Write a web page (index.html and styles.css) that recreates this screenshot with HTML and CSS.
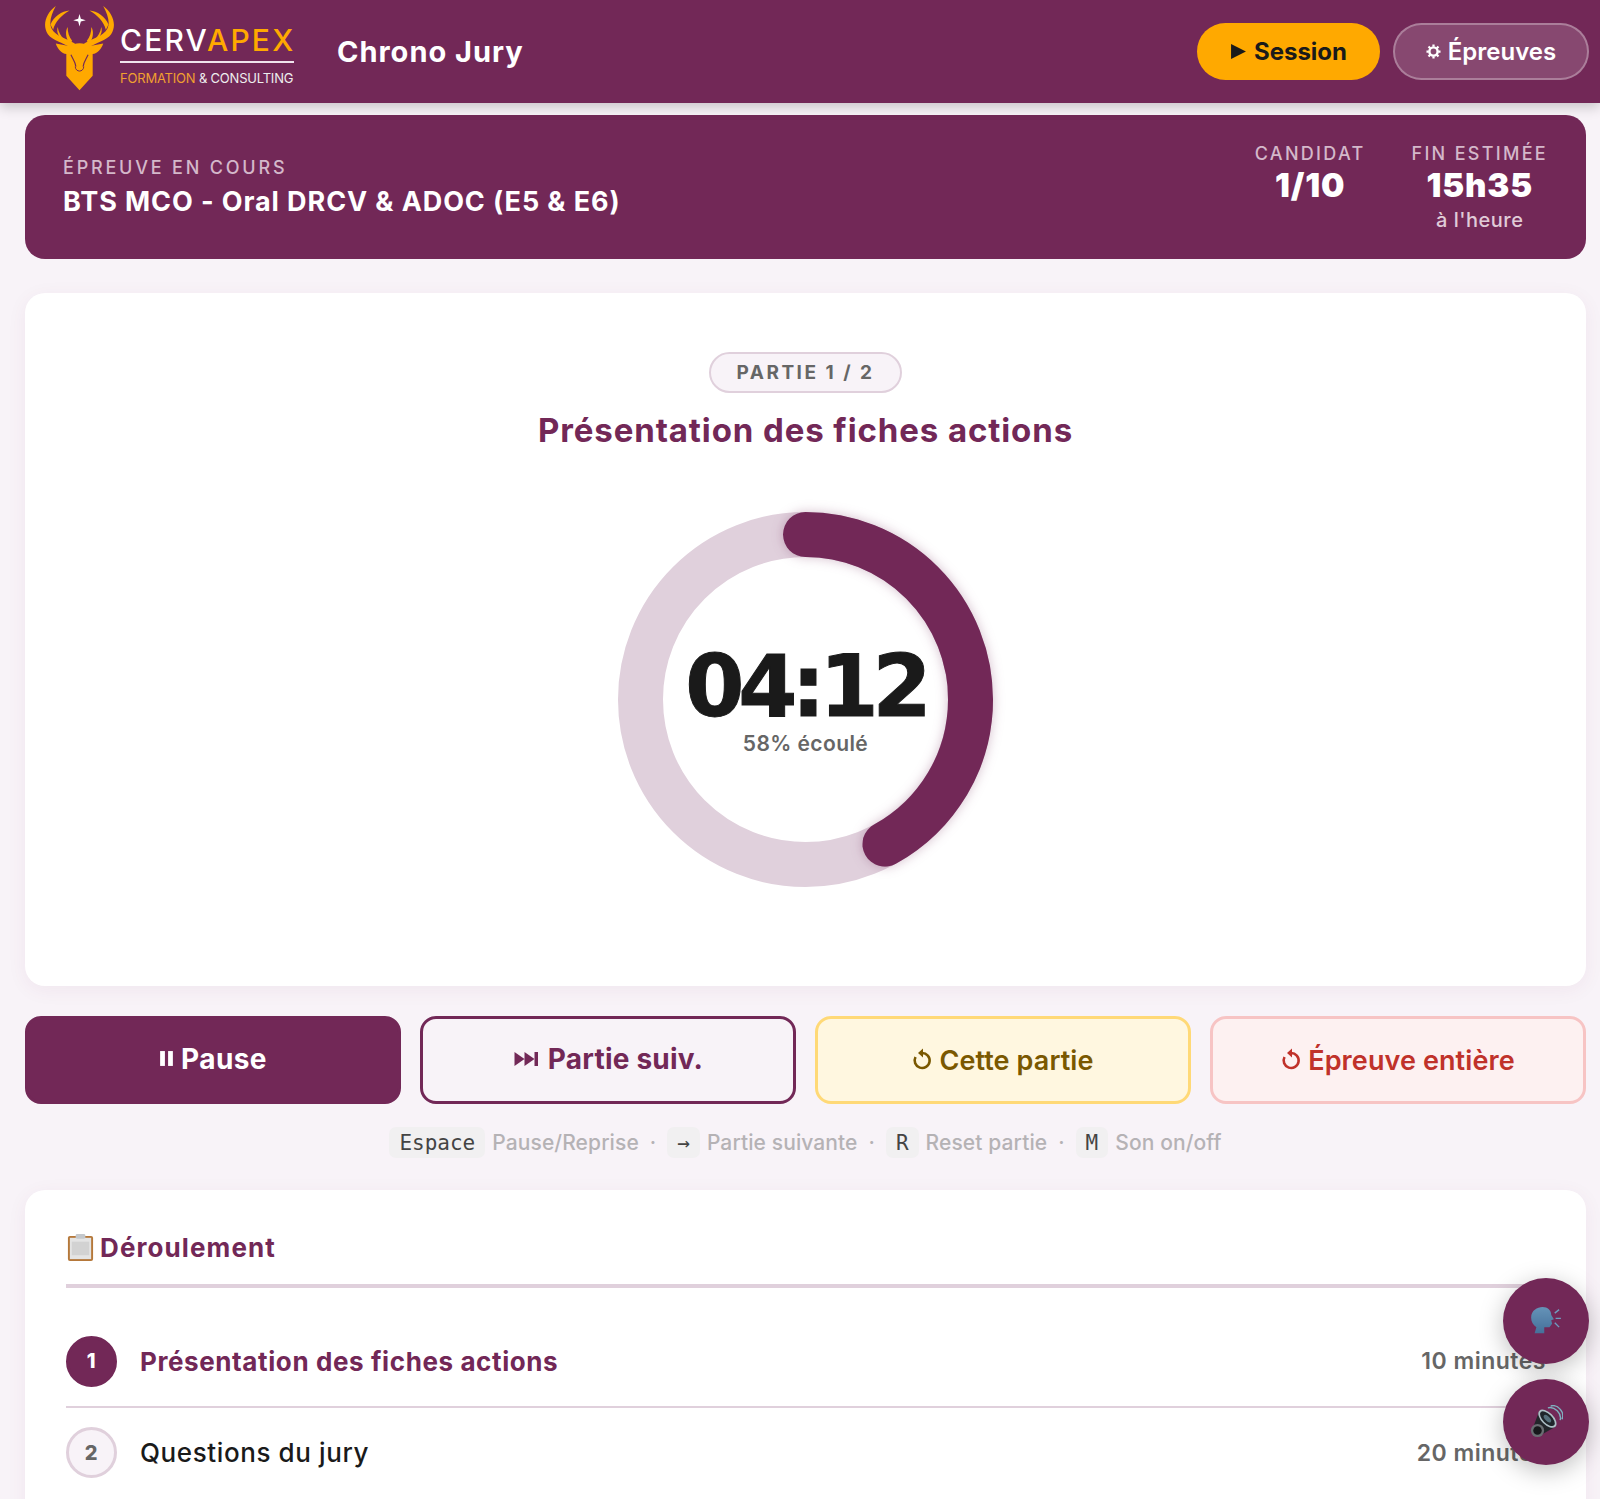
FILE: index.html
```html
<!DOCTYPE html>
<html lang="fr">
<head>
    <meta charset="UTF-8">
    <meta name="viewport" content="width=device-width, initial-scale=1.0">
    <title>Chrono Jury</title>
    <link rel="stylesheet" href="styles.css">
</head>
<body>
    <header class="topbar">
        <div class="brand">
            <div class="logo">
                <svg class="logo-deer" viewBox="40 8 220 264" aria-hidden="true">
                    <g fill="#ffa900">
                        <path d="M78 14 C48 36 36 72 54 100 C68 120 100 124 128 144 L136 128 C110 112 78 106 66 84 C56 66 64 40 78 14 Z"/>
                        <path d="M120 28 C96 30 72 46 62 70 L70 86 C76 62 96 42 120 28 Z"/>
                        <path d="M114 78 C106 92 108 112 120 128 L128 120 C118 108 114 94 114 78 Z"/>
                        <path d="M84 78 C80 90 84 104 96 116 L104 116 C94 106 86 94 84 78 Z"/>
                    </g>
                    <g fill="#ffa900" transform="matrix(-1 0 0 1 300 0)">
                        <path d="M78 14 C48 36 36 72 54 100 C68 120 100 124 128 144 L136 128 C110 112 78 106 66 84 C56 66 64 40 78 14 Z"/>
                        <path d="M120 28 C96 30 72 46 62 70 L70 86 C76 62 96 42 120 28 Z"/>
                        <path d="M114 78 C106 92 108 112 120 128 L128 120 C118 108 114 94 114 78 Z"/>
                        <path d="M84 78 C80 90 84 104 96 116 L104 116 C94 106 86 94 84 78 Z"/>
                    </g>
                    <path fill="#ffa900" d="M78 128 L122 136 C132 124 168 124 178 136 L222 128 C216 146 204 158 190 160 L190 226 L150 270 L110 226 L110 160 C96 158 84 146 78 128 Z"/>
                    <path fill="none" stroke="#722857" stroke-width="3.5" d="M124 162 C130 176 138 184 139 198 M176 162 C170 176 162 184 161 198"/>
                    <path fill="none" stroke="#722857" stroke-width="3" d="M137 198 C138 216 162 216 163 198"/>
                    <path fill="#fff" d="M150 38 L154 53 L169 57 L154 61 L150 76 L146 61 L131 57 L146 53 Z"/>
                </svg>
                <div class="logo-text">
                    <div class="logo-name">CERV<span>APEX</span></div>
                    <div class="logo-rule"></div>
                    <div class="logo-sub"><span>FORMATION</span> &amp; CONSULTING</div>
                </div>
            </div>
            <div class="app-title">Chrono Jury</div>
        </div>
        <nav class="top-actions">
            <button class="pill pill-session">
                <svg class="ico-play" viewBox="0 0 16 16"><path d="M1 1 L15 8 L1 15 Z"/></svg>
                Session
            </button>
            <button class="pill pill-ghost">
                <svg class="ico-gear" viewBox="0 0 16 16">
                    <circle cx="8" cy="8" r="4.4" fill="none" stroke="#fff" stroke-width="2.6"/>
                    <path stroke="#fff" stroke-width="2.4" d="M8 0.5V3M8 13V15.5M0.5 8H3M13 8H15.5M2.7 2.7L4.5 4.5M11.5 11.5L13.3 13.3M13.3 2.7L11.5 4.5M4.5 11.5L2.7 13.3"/>
                </svg>
                Épreuves
            </button>
        </nav>
    </header>

    <main class="page">
        <section class="banner">
            <div>
                <div class="banner-label">ÉPREUVE EN COURS</div>
                <div class="banner-title">BTS MCO - Oral DRCV &amp; ADOC (E5 &amp; E6)</div>
            </div>
            <div class="banner-stats">
                <div class="stat">
                    <div class="stat-label">CANDIDAT</div>
                    <div class="stat-value">1/10</div>
                </div>
                <div class="stat">
                    <div class="stat-label">FIN ESTIMÉE</div>
                    <div class="stat-value">15h35</div>
                    <div class="stat-note">à l'heure</div>
                </div>
            </div>
        </section>

        <section class="card timer-card">
            <div class="part-badge">PARTIE 1 / 2</div>
            <h2 class="part-title">Présentation des fiches actions</h2>
            <div class="ring">
                <svg class="ring-svg" viewBox="0 0 375 375">
                    <circle class="ring-track" cx="187.5" cy="187.5" r="165"/>
                    <circle class="ring-progress" cx="187.5" cy="187.5" r="165" pathLength="100" stroke-dasharray="42 100" transform="rotate(-90 187.5 187.5)"/>
                </svg>
                <div class="ring-center">
                    <div class="time">04:12</div>
                    <div class="elapsed">58% écoulé</div>
                </div>
            </div>
        </section>

        <section class="controls">
            <button class="ctl ctl-pause">
                <svg class="ico-pause" viewBox="0 0 14 16"><rect x="1" y="1" width="4.5" height="14"/><rect x="8.5" y="1" width="4.5" height="14"/></svg>
                Pause
            </button>
            <button class="ctl ctl-next">
                <svg class="ico-next" viewBox="0 0 26 16"><path d="M1 1 L11 8 L1 15 Z M11 1 L21 8 L11 15 Z"/><rect x="21" y="1" width="3.5" height="14"/></svg>
                Partie suiv.
            </button>
            <button class="ctl ctl-part">
                <svg class="ico-reset" viewBox="0 0 20 24"><path d="M10 5 A7.5 7.5 0 1 1 3.5 9" fill="none" stroke="currentColor" stroke-width="2.6"/><path d="M11 0.5 L6 5 L11 9.5 Z" fill="currentColor"/></svg>
                Cette partie
            </button>
            <button class="ctl ctl-all">
                <svg class="ico-reset" viewBox="0 0 20 24"><path d="M10 5 A7.5 7.5 0 1 1 3.5 9" fill="none" stroke="currentColor" stroke-width="2.6"/><path d="M11 0.5 L6 5 L11 9.5 Z" fill="currentColor"/></svg>
                Épreuve entière
            </button>
        </section>

        <p class="shortcuts">
            <kbd>Espace</kbd><span>Pause/Reprise</span><i>·</i>
            <kbd>→</kbd><span>Partie suivante</span><i>·</i>
            <kbd>R</kbd><span>Reset partie</span><i>·</i>
            <kbd>M</kbd><span>Son on/off</span>
        </p>

        <section class="card steps-card">
            <h3 class="steps-title">
                <svg class="ico-clip" viewBox="0 0 30 30">
                    <rect x="2" y="3" width="26" height="26" rx="2" fill="#b5783a"/>
                    <rect x="4" y="5" width="22" height="22" fill="#e4e4e4"/>
                    <rect x="6" y="9" width="18" height="14" fill="#d2d2d2"/>
                    <rect x="10" y="1" width="10" height="5" rx="1.5" fill="#c4c8cc"/>
                </svg>
                Déroulement
            </h3>
            <div class="step step-active">
                <div class="step-num">1</div>
                <div class="step-name">Présentation des fiches actions</div>
                <div class="step-time">10 minutes</div>
            </div>
            <div class="step">
                <div class="step-num">2</div>
                <div class="step-name">Questions du jury</div>
                <div class="step-time">20 minutes</div>
            </div>
        </section>
    </main>

    <div class="fabs">
        <button class="fab">
            <svg viewBox="0 0 36 32" width="32" height="28">
                <defs>
                    <linearGradient id="headBlue" x1="0" y1="0" x2="0" y2="1">
                        <stop offset="0" stop-color="#6593b8"/>
                        <stop offset="1" stop-color="#45709a"/>
                    </linearGradient>
                </defs>
                <path fill="url(#headBlue)" d="M1 12 C1 4 8 0 14 0 C20 0 24 4 24 9 L27 14 L24 15 L25 19 L22 23 L16 23 L16 30 L5 30 L7 23 C3 20 1 17 1 12 Z"/>
                <path fill="none" stroke="#6f9cc0" stroke-width="1.6" d="M28 7 L33 3 M29 13 H35 M28 18 L33 23"/>
            </svg>
        </button>
        <button class="fab">
            <svg viewBox="0 0 36 36" width="34" height="34">
                <path fill="none" stroke="#7fb0bf" stroke-width="1.5" d="M20 3 C27 1 35 9 33 16 M23 1 C31 -1 38 8 35 15"/>
                <path fill="#23262b" d="M11 6 L28 23 L14 31 L5 22 Z"/>
                <ellipse cx="19.5" cy="14.5" rx="12" ry="6.5" transform="rotate(45 19.5 14.5)" fill="#aebfc6"/>
                <ellipse cx="19.5" cy="14.5" rx="10" ry="4.8" transform="rotate(45 19.5 14.5)" fill="#1f262b"/>
                <ellipse cx="19.5" cy="14.5" rx="5" ry="2.4" transform="rotate(45 19.5 14.5)" fill="#56707c"/>
                <circle cx="9" cy="27" r="7" fill="#6a6d72"/>
                <circle cx="9" cy="27" r="4.5" fill="#17181b"/>
            </svg>
        </button>
    </div>
</body>
</html>
```

FILE: styles.css
```css
:root {
    --plum: #722857;
    --plum-light: #e0d0dc;
    --orange: #ffa900;
    --bg: #f8f3f8;
    --ink: #1a1a1a;
    --grey: #666666;
}
* {
    box-sizing: border-box;
}
html, body {
    margin: 0;
    height: 100%;
    overflow: hidden;
}
body {
    font-family: Inter, "Open Sans", sans-serif;
    background: var(--bg);
    color: var(--ink);
}
button {
    font-family: inherit;
    cursor: pointer;
}

/* top bar */
.topbar {
    display: flex;
    justify-content: space-between;
    align-items: center;
    height: 103px;
    padding: 0 11px 0 43px;
    background: var(--plum);
    box-shadow: 0 4px 12px rgba(0, 0, 0, 0.2);
    position: relative;
}
.brand {
    display: flex;
    align-items: center;
    gap: 43px;
}
.logo {
    display: flex;
    align-items: flex-end;
    gap: 4px;
    margin-bottom: 8px;
}
.logo-deer {
    width: 73px;
    height: 87px;
}
.logo-text {
    width: 174px;
    margin-bottom: 5px;
}
.logo-name {
    color: #fff;
    font-size: 30px;
    font-weight: 500;
    letter-spacing: 2.2px;
    line-height: 30px;
}
.logo-name span {
    color: var(--orange);
}
.logo-rule {
    height: 2px;
    background: #f0e4ec;
    margin: 6px 0 8px;
}
.logo-sub {
    color: #eee;
    font-size: 13px;
    line-height: 15px;
    letter-spacing: -0.2px;
    white-space: nowrap;
}
.logo-sub span {
    color: #f0a030;
}
.app-title {
    color: #fff;
    font-size: 29px;
    font-weight: 700;
    letter-spacing: 1px;
}
.top-actions {
    display: flex;
    align-items: center;
    gap: 13px;
}
.pill {
    display: flex;
    align-items: center;
    justify-content: center;
    gap: 7px;
    height: 57px;
    border-radius: 29px;
    font-size: 24px;
    font-weight: 700;
}
.pill-session {
    width: 183px;
    background: var(--orange);
    border: 0;
    color: var(--ink);
}
.pill-ghost {
    width: 196px;
    background: rgba(255, 255, 255, 0.15);
    border: 2px solid rgba(255, 255, 255, 0.3);
    color: #fff;
    font-weight: 600;
}
.ico-play {
    width: 17px;
    height: 17px;
    fill: var(--ink);
}
.ico-gear {
    width: 15px;
    height: 15px;
}

/* page */
.page {
    padding: 12px 14px 0 25px;
}
.banner {
    display: flex;
    justify-content: space-between;
    align-items: center;
    height: 144px;
    padding: 0 38px;
    border-radius: 20px;
    background: var(--plum);
    color: #fff;
}
.banner-label {
    color: #d4b8ca;
    font-size: 18px;
    font-weight: 500;
    letter-spacing: 2.8px;
    margin-bottom: 7px;
}
.banner-title {
    font-size: 27px;
    font-weight: 700;
    letter-spacing: 0.9px;
}
.banner-stats {
    display: flex;
    gap: 46px;
    align-self: flex-start;
    padding-top: 27px;
}
.stat {
    text-align: center;
}
.stat-label {
    color: #d4b8ca;
    font-size: 18px;
    font-weight: 500;
    letter-spacing: 2.3px;
    line-height: 23px;
}
.stat-value {
    font-size: 33px;
    font-weight: 900;
    letter-spacing: 0.8px;
    line-height: 40px;
}
.stat-note {
    color: #e0cbd8;
    font-size: 20px;
    font-weight: 500;
    letter-spacing: 0.5px;
    line-height: 30px;
}

.card {
    background: #fff;
    border-radius: 20px;
    box-shadow: 0 4px 20px rgba(114, 40, 87, 0.06);
}
.timer-card {
    display: flex;
    flex-direction: column;
    align-items: center;
    height: 693px;
    margin-top: 34px;
    padding-top: 59px;
}
.part-badge {
    display: flex;
    align-items: center;
    justify-content: center;
    width: 193px;
    height: 41px;
    border: 2px solid var(--plum-light);
    border-radius: 21px;
    background: var(--bg);
    color: var(--grey);
    font-size: 19px;
    font-weight: 700;
    letter-spacing: 2.5px;
}
.part-title {
    margin: 17px 0 0;
    color: var(--plum);
    font-size: 33px;
    font-weight: 700;
    letter-spacing: 0.9px;
    line-height: 40px;
}
.ring {
    display: grid;
    place-items: center;
    width: 375px;
    height: 375px;
    margin-top: 62px;
}
.ring-svg, .ring-center {
    grid-area: 1 / 1;
}
.ring-svg {
    width: 375px;
    height: 375px;
    overflow: visible;
}
.ring-track, .ring-progress {
    fill: none;
    stroke-width: 45;
}
.ring-track {
    stroke: var(--plum-light);
}
.ring-progress {
    stroke: var(--plum);
    stroke-linecap: round;
    filter: drop-shadow(0 0 6px rgba(114, 40, 87, 0.3));
}
.ring-center {
    text-align: center;
    margin-top: 1px;
}
.time {
    font-family: "DejaVu Sans", sans-serif;
    font-size: 85px;
    font-weight: 700;
    letter-spacing: -6px;
    line-height: 86px;
    -webkit-text-stroke: 1px var(--ink);
}
.elapsed {
    color: var(--grey);
    font-size: 21px;
    font-weight: 600;
    letter-spacing: 0.4px;
    margin-top: 1px;
}

/* buttons */
.controls {
    display: grid;
    grid-template-columns: repeat(4, 1fr);
    gap: 19px;
    margin-top: 30px;
}
.ctl {
    display: flex;
    align-items: center;
    justify-content: center;
    gap: 7px;
    height: 88px;
    border-radius: 16px;
    border: 3px solid transparent;
    font-size: 28px;
    font-weight: 700;
}
.ctl-pause {
    background: var(--plum);
    border-color: var(--plum);
    color: #fff;
    letter-spacing: 0.4px;
    padding-bottom: 4px;
}
.ctl-next {
    gap: 8px;
    background: var(--bg);
    border-color: var(--plum);
    color: var(--plum);
    letter-spacing: 0.2px;
    padding-bottom: 4px;
}
.ctl-part {
    background: #fff7e0;
    border-color: #ffd977;
    color: #7a5800;
    font-size: 27px;
    font-weight: 600;
    letter-spacing: 0.1px;
}
.ctl-all {
    background: #fdf1f1;
    border-color: #f7c4c4;
    color: #c0322a;
    font-size: 27px;
    font-weight: 600;
    letter-spacing: 0.1px;
}
.ico-pause {
    width: 15px;
    height: 17px;
    fill: #fff;
}
.ico-next {
    width: 27px;
    height: 16px;
    fill: var(--plum);
}
.ico-reset {
    width: 20px;
    height: 24px;
}

.shortcuts {
    display: flex;
    justify-content: center;
    align-items: center;
    height: 31px;
    margin: 23px 0 0;
    color: #b5b2b5;
    font-size: 21px;
    font-weight: 500;
}
.shortcuts kbd {
    display: flex;
    align-items: center;
    height: 31px;
    padding: 0 10px;
    border-radius: 7px;
    background: #f1f0f1;
    color: #444;
    font-family: "DejaVu Sans Mono", monospace;
    font-size: 21px;
}
.shortcuts span {
    margin-left: 7px;
    letter-spacing: 0.1px;
}
.shortcuts i {
    font-style: normal;
    margin: 0 11px;
}

/* deroulement */
.steps-card {
    margin-top: 32px;
    padding: 40px 40px 40px 41px;
    height: 400px;
}
.steps-title {
    display: flex;
    align-items: center;
    gap: 5px;
    height: 34px;
    margin: 0;
    padding-bottom: 20px;
    box-sizing: content-box;
    border-bottom: 4px solid var(--plum-light);
    color: var(--plum);
    font-size: 26px;
    font-weight: 700;
    letter-spacing: 1.1px;
}
.ico-clip {
    width: 29px;
    height: 29px;
}
.step {
    display: flex;
    align-items: center;
    gap: 23px;
    height: 89px;
    border-bottom: 2px solid var(--plum-light);
    font-size: 26px;
    font-weight: 500;
    letter-spacing: 0.6px;
}
.step:first-of-type {
    height: 120px;
    padding-top: 28px;
}
.step:last-child {
    border-bottom: 0;
}
.step-num {
    display: flex;
    align-items: center;
    justify-content: center;
    flex: none;
    width: 51px;
    height: 51px;
    border: 3px solid var(--plum-light);
    border-radius: 50%;
    background: var(--bg);
    color: var(--grey);
    font-size: 20px;
    font-weight: 800;
}
.step-name {
    flex: 1;
}
.step-time {
    color: var(--grey);
    font-size: 23px;
    font-weight: 600;
    letter-spacing: 0.5px;
}
.step-active .step-num {
    background: var(--plum);
    border-color: var(--plum);
    color: #fff;
}
.step-active .step-name {
    color: var(--plum);
    font-weight: 700;
}

/* floating buttons */
.fabs {
    position: fixed;
    right: 11px;
    bottom: 34px;
    display: flex;
    flex-direction: column;
    gap: 15px;
}
.fab {
    display: flex;
    align-items: center;
    justify-content: center;
    width: 86px;
    height: 86px;
    border: 0;
    border-radius: 50%;
    background: var(--plum);
    box-shadow: 0 6px 24px rgba(0, 0, 0, 0.25);
}
```
